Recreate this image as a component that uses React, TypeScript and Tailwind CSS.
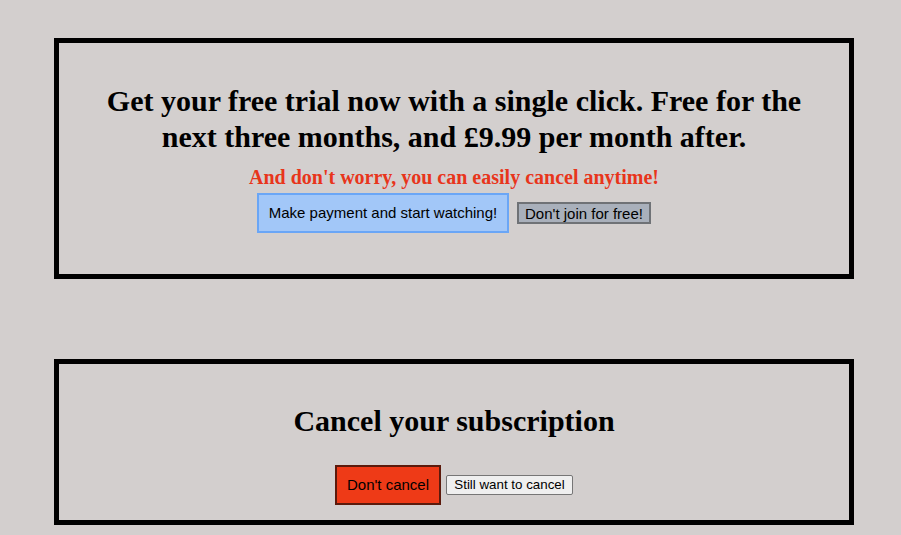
import React from "react";

export default function App() {
  return (
    <div className="min-h-[535px] w-full bg-[#d3cfce] pt-[38px] pb-[10px]" style={{ fontFamily: '"Liberation Serif", serif' }}>
      <div className="ml-[54px] w-[800px] h-[241px] border-[5px] border-black flex flex-col items-center pt-[40px]">
        <h1 className="text-[30px] leading-[36px] font-bold text-black text-center w-[720px]">
          Get your free trial now with a single click. Free for the next three months, and £9.99 per month after.
        </h1>
        <p className="mt-[10px] text-[20px] leading-[24px] font-bold text-[#e8351b]">
          And don't worry, you can easily cancel anytime!
        </p>
        <div className="mt-[4px] flex items-center gap-[8px]" style={{ fontFamily: '"Liberation Sans", Arial, sans-serif' }}>
          <button className="h-[40px] w-[252px] border-2 border-[#6aa6f6] bg-[#a2c7f8] text-[15px] text-black">
            Make payment and start watching!
          </button>
          <button className="h-[22px] w-[134px] border-2 border-[#6f7276] bg-[#a9b0bb] text-[15px] leading-none text-black">
            Don't join for free!
          </button>
        </div>
      </div>
      <div className="mt-[80px] ml-[54px] w-[800px] h-[166px] border-[5px] border-black flex flex-col items-center pt-[39px]">
        <h2 className="text-[30px] leading-[36px] font-bold text-black">Cancel your subscription</h2>
        <div className="mt-[26px] flex items-center gap-[5px]" style={{ fontFamily: '"Liberation Sans", Arial, sans-serif' }}>
          <button className="h-[40px] w-[106px] border-2 border-[#5b1a0c] bg-[#ee3a17] text-[15px] text-black">
            Don't cancel
          </button>
          <button className="h-[20px] w-[127px] border border-[#767676] rounded-[2px] bg-[#efefef] text-[13.33px] text-black leading-none">
            Still want to cancel
          </button>
        </div>
      </div>
    </div>
  );
}
